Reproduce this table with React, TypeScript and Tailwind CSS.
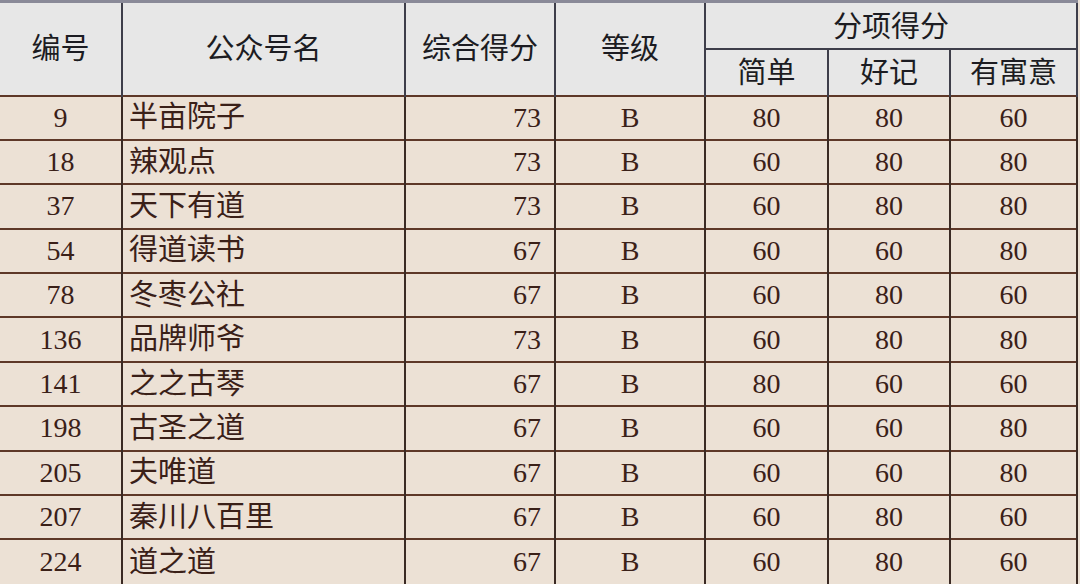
const rows = [
  ["9", "半亩院子", "73", "B", "80", "80", "60"],
  ["18", "辣观点", "73", "B", "60", "80", "80"],
  ["37", "天下有道", "73", "B", "60", "80", "80"],
  ["54", "得道读书", "67", "B", "60", "60", "80"],
  ["78", "冬枣公社", "67", "B", "60", "80", "60"],
  ["136", "品牌师爷", "73", "B", "60", "80", "80"],
  ["141", "之之古琴", "67", "B", "80", "60", "60"],
  ["198", "古圣之道", "67", "B", "60", "60", "80"],
  ["205", "夫唯道", "67", "B", "60", "60", "80"],
  ["207", "秦川八百里", "67", "B", "60", "80", "60"],
  ["224", "道之道", "67", "B", "60", "80", "60"],
]

const font = { fontFamily: '"Liberation Serif", "Noto Sans CJK SC", serif' }

const App = () => {
  return (
    <div className="w-[1080px] h-[584px] overflow-hidden bg-[#ece1d5]" style={font}>
      <table className="w-[1077px] table-fixed border-collapse text-[28px] leading-none">
        <colgroup>
          <col className="w-[122px]" />
          <col className="w-[283px]" />
          <col className="w-[150px]" />
          <col className="w-[150px]" />
          <col className="w-[123px]" />
          <col className="w-[122px]" />
          <col className="w-[127px]" />
        </colgroup>
        <thead className="bg-[#e7e7e7] text-[#1c1c22] text-[29px]">
          <tr className="h-[47px] border-t-[3px] border-t-[#8a8a98]">
            <th rowSpan={2} className="font-normal border-r-2 border-[#3e3e4a] pt-[2px]">编号</th>
            <th rowSpan={2} className="font-normal border-r-2 border-[#3e3e4a] pt-[2px]">公众号名</th>
            <th rowSpan={2} className="font-normal border-r-2 border-[#3e3e4a] pt-[2px]">综合得分</th>
            <th rowSpan={2} className="font-normal border-r-2 border-[#3e3e4a] pt-[2px]">等级</th>
            <th colSpan={3} className="font-normal border-r-2 border-b-2 border-[#3e3e4a] pt-[4px]">分项得分</th>
          </tr>
          <tr className="h-[47px]">
            <th className="font-normal border-r-2 border-[#3e3e4a] pt-[2px]">简单</th>
            <th className="font-normal border-r-2 border-[#3e3e4a] pt-[2px]">好记</th>
            <th className="font-normal border-r-2 border-[#3e3e4a] pt-[2px]">有寓意</th>
          </tr>
        </thead>
        <tbody className="text-[#3a2018]">
          {rows.map((r) => (
            <tr key={r[0]} className="h-[44.4px] border-t-2 border-[#5e3828]">
              <td className="text-center border-r-2 border-[#3a2a24]">{r[0]}</td>
              <td className="text-left pl-[6px] border-r-2 border-[#3a2a24] text-[29px]">{r[1]}</td>
              <td className="text-right pr-[13px] border-r-2 border-[#3a2a24]">{r[2]}</td>
              <td className="text-center border-r-2 border-[#3a2a24]">{r[3]}</td>
              <td className="text-center border-r-2 border-[#3a2a24]">{r[4]}</td>
              <td className="text-center border-r-2 border-[#3a2a24]">{r[5]}</td>
              <td className="text-center border-r-2 border-[#3a2a24]">{r[6]}</td>
            </tr>
          ))}
        </tbody>
      </table>
    </div>
  )
}

export default App
